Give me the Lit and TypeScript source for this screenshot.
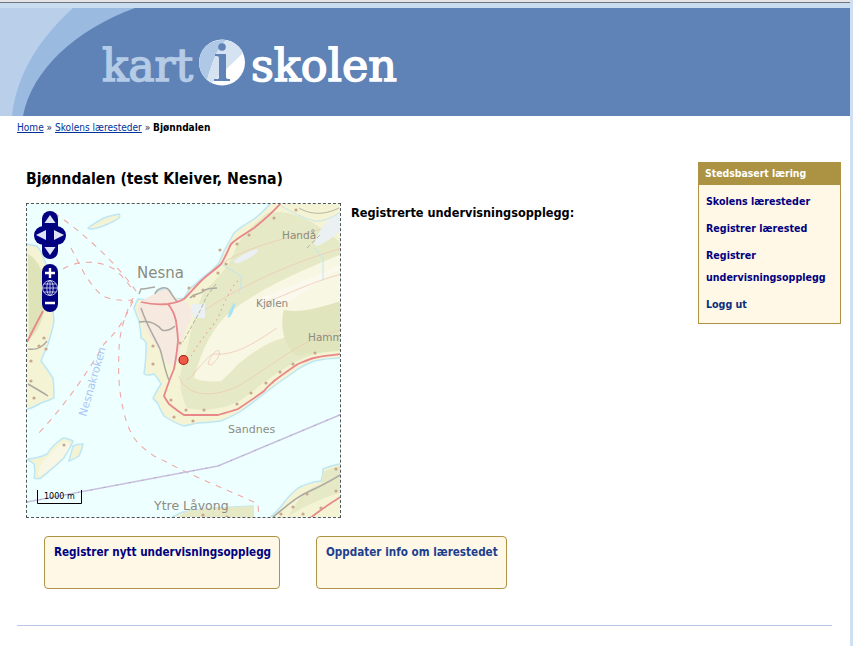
import { LitElement, html, css, svg } from "lit";
import { customElement } from "lit/decorators.js";

const LAND = "#f4f3d4";
const GREEN = "#e5e9c5";
const ROAD = "#e8868a";
const WATER_EDGE = "#bde6f6";

// small brown village dots, map coordinates
const dots = [
  [269, 6], [247, 14], [222, 31], [210, 40], [193, 46], [199, 60], [191, 69], [162, 84], [176, 86], [167, 92],
  [153, 139], [17, 134], [12, 142], [126, 160], [126, 142], [144, 196], [159, 206], [177, 206], [147, 213],
  [166, 217], [210, 200], [224, 189], [239, 179], [253, 168], [266, 160], [288, 149], [4, 157], [19, 145],
  [4, 177], [7, 194], [37, 241], [309, 265], [280, 290], [266, 303], [254, 310], [276, 310], [294, 304],
  [309, 287], [200, 313], [176, 311]
];

@customElement("app-root")
export class AppRoot extends LitElement {
  static styles = css`
    :host {
      display: block;
      height: 646px;
      overflow: hidden;
      background: #fff;
      color: #000;
      font-family: "DejaVu Sans", sans-serif;
      font-stretch: condensed;
    }
    .frame { height: 646px; border-right: 3px solid #cfe0f2; }
    .top { height: 2px; background: #e4e4e4; border-bottom: 1px solid #6f7480; }
    .band { height: 5px; background: #c9dcf0; }
    .banner { display: block; width: 850px; height: 108px; }
    .logo { font-family: "DejaVu Serif", serif; font-size: 45px; stroke-width: 1.4px; }
    .crumbs { padding: 5px 0 0 17px; height: 15px; font-size: 10.05px; line-height: 14px; color: #224; }
    .crumbs a { color: #003399; text-decoration: underline; }
    .crumbs b { color: #000; }
    .main { display: flex; height: 489px; }
    .content { width: 698px; padding: 32px 0 0 26px; box-sizing: border-box; }
    h1 { margin: 0 0 13px; font-size: 15.7px; line-height: 22px; font-weight: 700; }
    .row { display: flex; gap: 10px; }
    .map { display: block; width: 315px; height: 315px; box-sizing: border-box; border: 1px dashed #555; background: #eeffff; flex: none; }
    .map text { font-family: "DejaVu Sans", sans-serif; font-stretch: normal; }
    h2 { margin: 0; font-size: 12.6px; line-height: 20px; font-weight: 700; }
    .actions { display: flex; gap: 36px; margin: 18px 0 0 18px; }
    .action {
      height: 53px;
      box-sizing: border-box;
      padding: 7px 9px;
      background: #fff8e6;
      border: 1px solid #ad9343;
      border-radius: 4px;
      font-size: 11.6px;
      line-height: 17px;
      font-weight: 700;
      white-space: nowrap;
    }
    .action.first { width: 236px; color: #000080; }
    .action.second { width: 191px; color: #1c3f8f; }
    .side {
      margin-top: 26px;
      width: 143px;
      height: 162px;
      box-sizing: border-box;
      background: #fff8e6;
      border: 1px solid #ad9343;
    }
    .side-title {
      height: 22px;
      background: #ab9343;
      color: #fff;
      padding-left: 6px;
      font-size: 10.4px;
      line-height: 21px;
      font-weight: 700;
    }
    .side ul { list-style: none; margin: 5px 0 0; padding: 0 0 0 7px; }
    .side li { font-size: 10.6px; line-height: 22px; margin-bottom: 5px; font-weight: 700; color: #000080; }
    .side li.visited { color: #0b2f7f; }
    hr { margin: 0 0 0 17px; width: 815px; height: 1px; border: 0; background: #b9c8e6; }
  `;

  renderBanner() {
    return html`<svg class="banner" viewBox="0 0 850 108">
      <rect width="850" height="108" fill="#5f83b7"></rect>
      <path d="M0 0H135C75 22 32 62 23 108H0Z" fill="#9bbae0"></path>
      <path d="M0 0H73C40 30 17 65 12 108H0Z" fill="#b9cfea"></path>
      <text class="logo" x="102" y="73" fill="#b5cbe6" stroke="#b5cbe6" textLength="91" lengthAdjust="spacingAndGlyphs">kart</text>
      <text class="logo" x="251" y="73" fill="#fff" stroke="#fff" textLength="146" lengthAdjust="spacingAndGlyphs">skolen</text>
      <circle cx="222" cy="54.5" r="23" fill="#fff"></circle>
      <path d="M207 72A23 23 0 0 1 226 32C216 42 212 56 207 72Z" fill="#afc8e6"></path>
      <path d="M207 72C212 56 216 42 226 32A23 23 0 0 1 243 45L212 75Z" fill="#d4e2f2"></path>
      <circle cx="222" cy="39" r="3.8" fill="#5f83b7"></circle>
      <path d="M215 46H226V69C226 71 228 71 230 71V73H214V71C218 71 219 71 219 69V50C219 48 217 48 215 48Z" fill="#5f83b7"></path>
    </svg>`;
  }

  renderMap() {
    return html`<svg class="map" viewBox="0 0 313 313">
      <!-- land -->
      <g fill="${LAND}" stroke="${WATER_EDGE}" stroke-width="1.5">
        <path d="M245 -2C238 5 234 10 227 15C218 21 212 24 207 29C203 36 200 42 197 47C195 52 193 57 191 60C186 66 180 70 174 75C170 79 166 82 162 85C160 90 158 92 157 94C153 95 150 95 147 94C145 90 143 87 141 85C137 85 134 86 131 87C129 91 128 94 126 97C120 96 115 95 111 95C109 98 108 101 107 104C109 109 110 113 112 117C113 124 114 129 114 134C121 137 119 142 119 147C119 155 118 162 117 170C120 172 124 171 127 170C130 173 132 176 134 180C130 186 128 190 126 194C128 197 130 198 131 200C133 205 135 209 137 212C143 216 150 220 157 222C162 221 166 220 171 219C179 219 186 218 194 217C201 214 208 211 214 207C221 202 228 197 234 192C241 187 247 182 254 177C260 173 266 169 271 165C276 162 282 159 287 157C296 155 305 154 316 154V-2Z"></path>
        <path d="M-2 40L10 42C17 50 20 62 22 74C24 86 26 102 27 117C26 124 24 130 22 137C20 144 16 151 14 157C18 162 22 168 26 174C27 181 27 188 27 194C22 196 18 198 14 199C9 202 5 204 1 205H-2Z"></path>
        <path d="M-2 255C2 256 5 258 7 260C8 265 8 270 7 274C10 275 12 275 14 274C21 268 30 261 37 254C40 248 44 243 46 237C42 235 39 234 36 234C30 238 24 243 20 250C12 254 6 255 -2 255Z"></path>
        <path d="M46 242C48 241 52 240 56 240C55 244 54 248 52 252C49 254 45 256 42 257C43 252 45 247 46 242Z"></path>
        <path d="M61 24C66 20 71 17 77 14C82 12 87 11 92 10C93 11 93 13 92 14C88 17 85 18 81 20C76 22 70 25 64 25C62 25 61 25 61 24Z"></path>
        <path d="M316 259C308 261 302 262 296 265C296 270 295 274 294 277C286 278 278 280 271 284C265 289 260 294 256 300C252 305 247 310 241 316H316Z"></path>
        <path d="M141 316C148 311 154 308 161 307C180 304 205 303 226 302V316Z"></path>
      </g>
      <!-- forest and high ground -->
      <path d="M240 9C225 22 212 34 208 46C203 60 192 74 178 86C170 100 164 126 160 146C152 166 150 184 160 204C178 208 198 205 214 196C236 180 258 160 287 150C298 148 306 147 315 147V40C290 18 268 8 250 8Z" fill="${GREEN}"></path>
      <path d="M1 50C12 56 17 70 19 86C20 106 14 124 2 136Z" fill="#dfe3b8"></path>
      <path d="M315 50C286 62 246 78 214 100C196 112 180 128 167 174C176 178 185 178 194 177C200 172 206 166 211 160C222 152 234 142 247 137C270 130 296 120 315 110Z" fill="#f8f7e3"></path>
      <path d="M315 60C290 72 258 84 227 97C240 108 262 100 285 82C296 74 306 68 315 65Z" fill="#fbf9ee"></path>
      <path d="M257 106C276 110 296 102 315 97V147C304 147 288 148 270 152C258 145 252 122 257 106Z" fill="#e1e5bd"></path>
      <path d="M114 98C122 92 134 86 140 85C145 88 148 96 157 97C165 100 168 112 160 122C156 132 154 146 150 160L140 160C130 140 118 130 110 104Z" fill="#f6e9df"></path>
      <path d="M160 307C180 304 205 303 226 302V314H150Z" fill="${GREEN}"></path>
      <path d="M296 268C306 264 310 262 315 261V288C296 294 280 300 262 312C268 298 280 284 294 280Z" fill="${GREEN}"></path>
      <path d="M38 238C44 238 44 242 38 250C30 260 20 268 12 272C10 266 14 258 22 252C28 246 32 240 38 238Z" fill="#f8f7e6"></path>
      <!-- contour lines -->
      <g fill="none" stroke="#efc9b4" stroke-width="0.8">
        <path d="M185 66C215 44 250 36 300 24"></path>
        <path d="M172 110C210 84 255 62 315 44"></path>
        <path d="M152 172C158 192 185 196 215 180C250 158 280 132 315 126"></path>
        <path d="M160 176C170 168 178 154 186 150C208 152 226 140 250 124"></path>
        <path d="M181 160C184 150 190 145 192 147C194 152 188 158 184 161Z"></path>
        <path d="M230 100C252 96 276 80 315 70"></path>
      </g>
      <!-- snow patches and lakes -->
      <path d="M207 57C214 51 224 46 231 45C232 49 222 55 212 59C209 60 207 59 207 57Z" fill="#ebf0f2"></path>
      <path d="M287 40C292 24 302 12 314 10V26C306 34 296 40 290 42Z" fill="#ebf0f2"></path>
      <path d="M164 100H178V114H166Z" fill="#ebf0f2"></path>
      <path d="M207 99C209 99 208 103 205 110C203 114 200 115 201 112C202 106 205 102 207 99Z" fill="#a9e2f5"></path>
      <path d="M254 2C265 8 276 14 287 17C296 18 304 14 314 8M194 60C200 64 208 68 214 72C215 78 213 84 212 90M287 44L296 54V77" stroke="#bde4f0" stroke-width="0.9" fill="none"></path>
      <!-- dashed ferry lines -->
      <g fill="none" stroke="#f0a9a6" stroke-width="1.1" stroke-dasharray="6 6">
        <path d="M27 9C50 24 88 56 111 90"></path>
        <path d="M36 65C50 56 72 56 87 65C96 72 102 80 106 87"></path>
        <path d="M44 44L57 69C64 80 70 88 76 92C84 96 96 97 106 96"></path>
        <path d="M106 97C98 115 90 128 77 140C60 170 35 205 9 232"></path>
        <path d="M106 94C98 110 92 130 92 147C91 170 92 182 94 194C97 212 100 222 107 234C113 242 120 247 127 252C140 258 150 264 161 269C185 280 210 290 231 300L232 315"></path>
      </g>
      <path d="M211 77C206 80 200 92 191 114C186 122 176 132 164 152" fill="none" stroke="#ef9d9a" stroke-width="1.1" stroke-dasharray="1.5 4"></path>
      <!-- boundary -->
      <path d="M0 298L191 262L315 210" fill="none" stroke="#c9c0de" stroke-width="1.5"></path>
      <path d="M0 298L191 262L315 210" fill="none" stroke="#8a80a8" stroke-width="0.7" stroke-dasharray="1 12"></path>
      <!-- roads -->
      <g fill="none" stroke="#aaa9a2" stroke-width="1.5">
        <path d="M114 104C120 122 126 130 133 145C136 154 138 168 142 176"></path>
        <path d="M112 118C122 116 130 120 135 126C140 128 146 124 148 122"></path>
        <path d="M128 90C130 84 138 82 142 86C146 92 148 96 150 97"></path>
        <path d="M163 94C168 88 172 92 178 86C182 84 184 84 190 84"></path>
        <path d="M112 90L114 85C120 85 125 83 128 83"></path>
        <path d="M1 180C8 184 15 188 21 192"></path>
        <path d="M1 145C8 146 14 145 20 137"></path>
        <path d="M246 313C260 302 270 292 285 286C295 282 305 276 315 270"></path>
      </g>
      <path d="M189 80L180 92C176 100 172 110 168 116C164 124 160 130 156 138" fill="none" stroke="#b5b4a4" stroke-width="1" stroke-dasharray="4 2"></path>
      <path d="M272 4C282 10 296 12 312 4" fill="none" stroke="#b7b5a6" stroke-width="1"></path>
      <path d="M280 44L294 30" fill="none" stroke="#b5b4a4" stroke-width="1" stroke-dasharray="4 3"></path>
      <g fill="none" stroke="${ROAD}" stroke-width="1.8">
        <path d="M254 -1C246 8 237 16 227 24C218 30 210 34 204 40C201 46 198 54 194 60C188 66 180 71 174 77C168 83 162 90 157 95C152 98 147 99 141 100C132 101 122 100 114 98"></path>
        <path d="M141 100C146 106 148 112 149 117C150 125 151 132 151 137C150 147 149 155 147 165C143 174 140 183 137 192C138 194 140 197 142 200C147 204 152 208 157 211C168 211 180 211 191 211C198 209 205 207 211 205C220 199 229 193 237 187C240 183 244 180 247 177C255 171 263 165 271 160C276 158 282 155 287 154C296 152 305 151 315 150"></path>
        <path d="M0 138C4 130 9 120 16 107"></path>
        <path d="M315 292C302 300 292 307 282 315"></path>
      </g>
      ${dots.map(([x, y]) => svg`<circle cx=${x} cy=${y} r="1.6" fill="#c9a98e"></circle>`)}
      <!-- labels -->
      <g fill="#8d8b7f">
        <text x="110" y="74" font-size="15">Nesna</text>
        <text x="255" y="35" font-size="10.5">Handå</text>
        <text x="229" y="103" font-size="10.5">Kjølen</text>
        <text x="281" y="137" font-size="10.5">Hamm</text>
        <text x="201" y="229" font-size="11">Sandnes</text>
        <text x="127" y="306" font-size="12.5">Ytre Låvong</text>
      </g>
      <text transform="translate(59 213) rotate(-74)" font-size="11" fill="#a9c6f2">Nesnakroken</text>
      <!-- marker -->
      <circle cx="156.5" cy="156" r="4.5" fill="#ee5a45" stroke="#a51d14" stroke-width="1.1"></circle>
      <!-- scale bar -->
      <path d="M10.5 286V299.5H54.5V286" fill="none" stroke="#000" stroke-width="1"></path>
      <text x="17" y="295" font-size="8" fill="#000">1000 m</text>
      <!-- pan and zoom controls -->
      <g fill="#000080">
        <rect x="15" y="7" width="16" height="48" rx="8"></rect>
        <rect x="7" y="22" width="32" height="19" rx="9.5"></rect>
        <rect x="15" y="60" width="16" height="48" rx="8"></rect>
      </g>
      <g fill="#dfe4f5">
        <path d="M23 11L28.5 19H17.5Z"></path>
        <path d="M23 51L28.5 43H17.5Z"></path>
        <path d="M9 31L19 26V36Z"></path>
        <path d="M37 31L27 26V36Z"></path>
      </g>
      <path d="M18 69H28M23 64V74M18 99H28" stroke="#fff" stroke-width="2.4"></path>
      <g fill="none" stroke="#dfe4f5" stroke-width="0.8">
        <circle cx="23" cy="84" r="7.5"></circle>
        <ellipse cx="23" cy="84" rx="3.2" ry="7.5"></ellipse>
        <path d="M15.5 84H30.5M17 80H29M17 88H29M23 76.5V91.5"></path>
      </g>
    </svg>`;
  }

  render() {
    return html`<div class="frame">
      <div class="top"></div>
      <div class="band"></div>
      ${this.renderBanner()}
      <div class="crumbs">
        <a>Home</a> » <a>Skolens læresteder</a> » <b>Bjønndalen</b>
      </div>
      <div class="main">
        <div class="content">
          <h1>Bjønndalen (test Kleiver, Nesna)</h1>
          <div class="row">
            ${this.renderMap()}
            <h2>Registrerte undervisningsopplegg:</h2>
          </div>
          <div class="actions">
            <div class="action first">Registrer nytt undervisningsopplegg</div>
            <div class="action second">Oppdater info om lærestedet</div>
          </div>
        </div>
        <div class="side">
          <div class="side-title">Stedsbasert læring</div>
          <ul>
            <li>Skolens læresteder</li>
            <li>Registrer lærested</li>
            <li>Registrer undervisningsopplegg</li>
            <li class="visited">Logg ut</li>
          </ul>
        </div>
      </div>
      <hr />
    </div>`;
  }
}
